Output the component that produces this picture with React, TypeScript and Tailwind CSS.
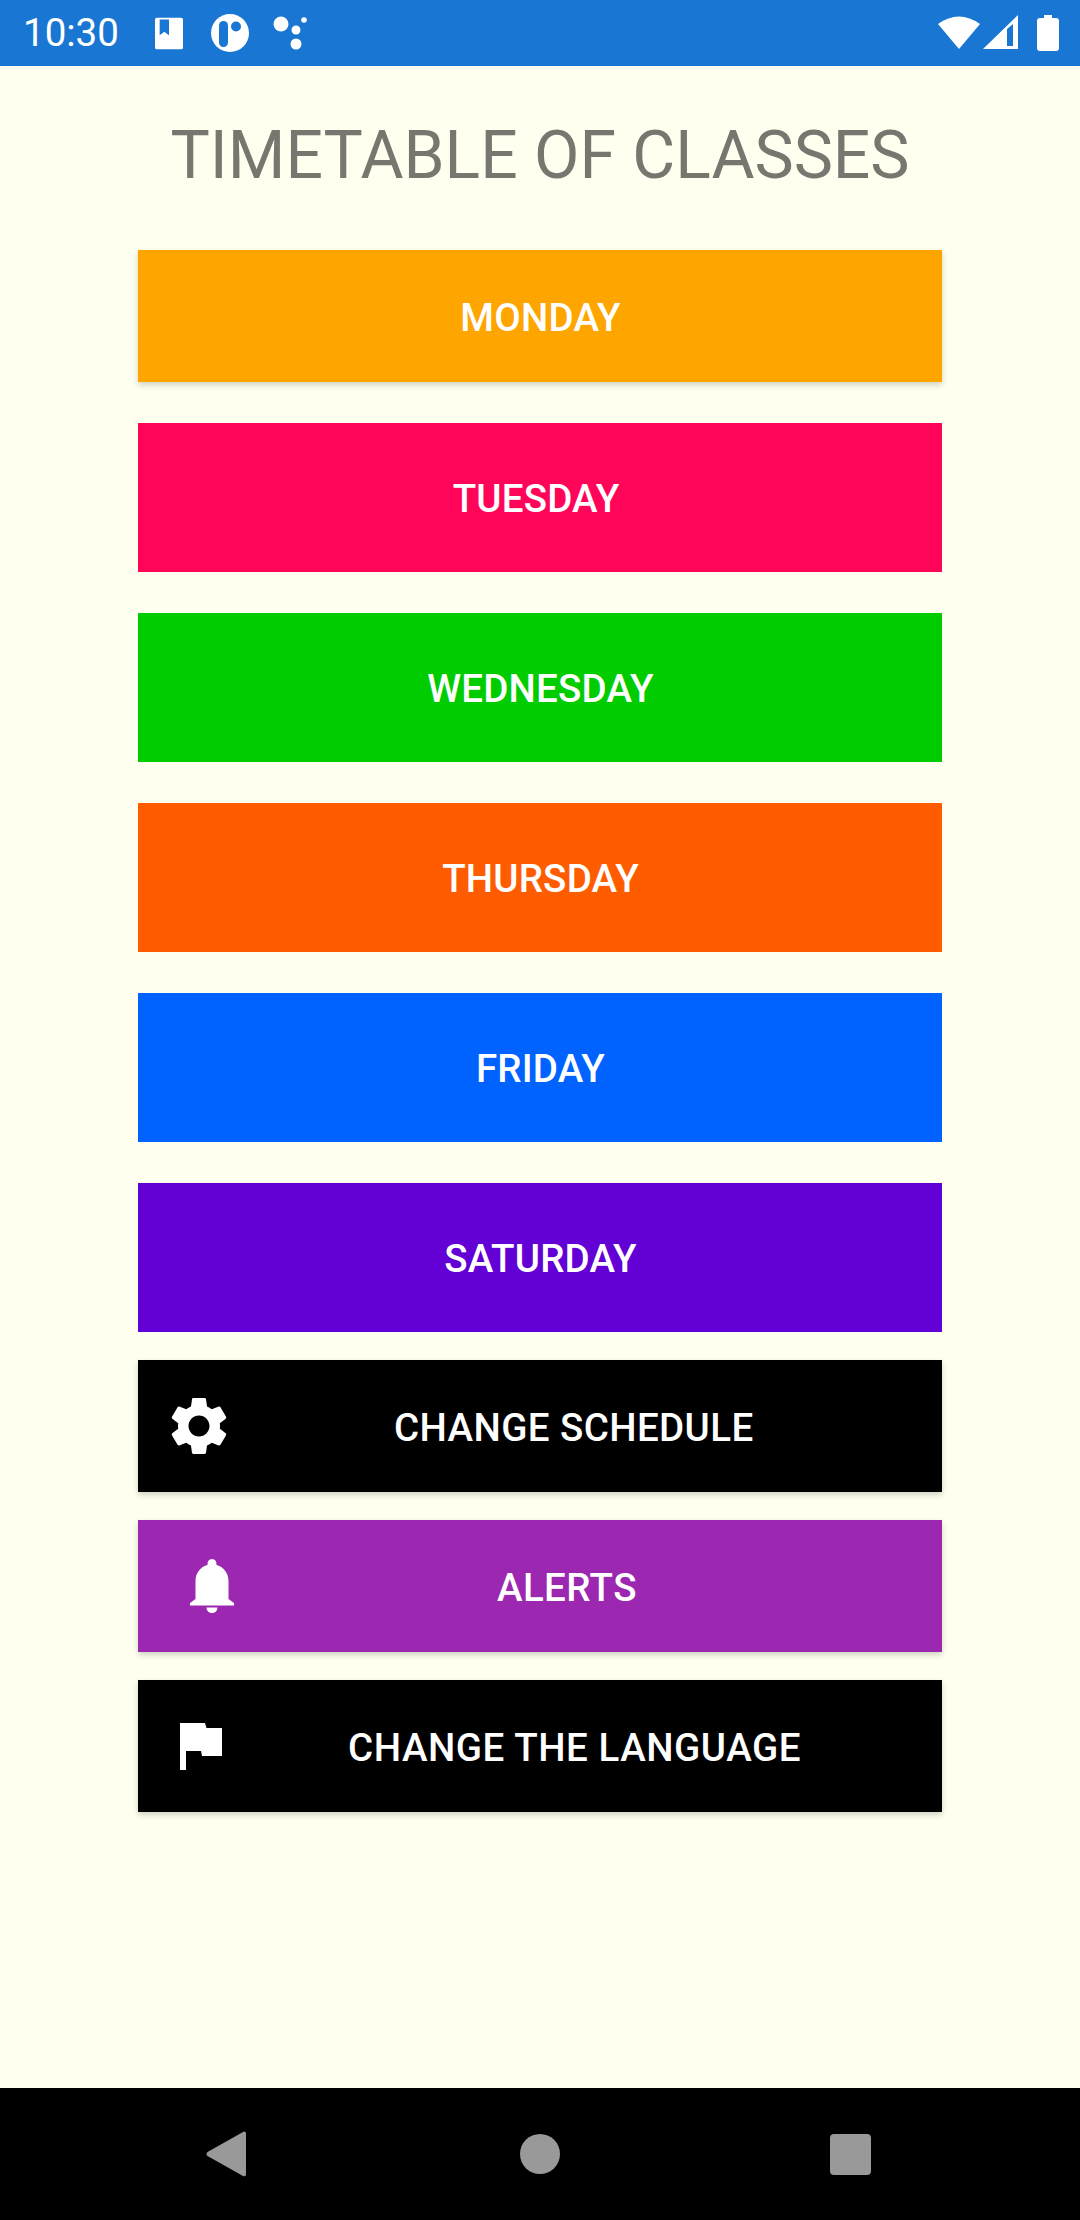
import React from 'react';

const days = [
  { label: 'MONDAY', cls: 'bg-[#ffa500] h-[132px] mt-0 shadow-[0_3px_6px_rgba(0,0,0,0.18)]', text: 'pl-[1px]' },
  { label: 'TUESDAY', cls: 'bg-[#ff055a] h-[149px] mt-[41px]', text: 'pr-[8px]' },
  { label: 'WEDNESDAY', cls: 'bg-[#00cc00] h-[149px] mt-[41px]', text: 'pl-[1px]' },
  { label: 'THURSDAY', cls: 'bg-[#ff5c00] h-[149px] mt-[41px]', text: 'pl-[1px]' },
  { label: 'FRIDAY', cls: 'bg-[#0062ff] h-[149px] mt-[41px]', text: 'pl-[1px]' },
  { label: 'SATURDAY', cls: 'bg-[#6200d6] h-[149px] mt-[41px]', text: 'pl-[1px]' },
];

function StatusBar() {
  return (
    <div className="h-[66px] bg-[#1976d2] flex items-center text-white shrink-0">
      <span className="ml-[23px] text-[38.500px] font-[Roboto] leading-none">10:30</span>
      <svg className="ml-[36px]" width="28" height="35" viewBox="0 0 30 36" fill="#fff">
        <path fillRule="evenodd" d="M2 1h26a2 2 0 0 1 2 2v30a2 2 0 0 1-2 2H2a2 2 0 0 1-2-2V3a2 2 0 0 1 2-2zM5 3v17l5-4 5 4V3z" />
      </svg>
      <svg className="ml-[28px]" width="38" height="38" viewBox="0 0 38 38">
        <circle cx="19" cy="19" r="19" fill="#fff" />
        <rect x="8" y="7" width="9" height="26" rx="4.500" fill="#1976d2" />
        <circle cx="25" cy="12.500" r="5" fill="#1976d2" />
      </svg>
      <svg className="ml-[24px]" width="36" height="36" viewBox="0 0 36 36" fill="#fff">
        <circle cx="8" cy="9" r="7.500" />
        <circle cx="23" cy="15" r="4.500" />
        <circle cx="31" cy="5" r="2.800" />
        <circle cx="23" cy="29" r="5.500" />
      </svg>
      <div className="flex-1" />
      <svg width="42" height="36" viewBox="0 0 42 36" fill="#fff">
        <path d="M0 9 Q21 -6 42 9 L21 34 Z" />
      </svg>
      <svg className="ml-[3px]" width="35" height="36" viewBox="0 0 35 36">
        <path fill="#fff" d="M35 0v34H0z" />
        <path fill="#1976d2" d="M24 14 L30 9 L30 31 L24 31z" />
      </svg>
      <svg className="ml-[19px] mr-[21px]" width="22" height="36" viewBox="0 0 22 36" fill="#fff">
        <path d="M7 0h8v3h4a3 3 0 0 1 3 3v27a3 3 0 0 1-3 3H3a3 3 0 0 1-3-3V6a3 3 0 0 1 3-3h4z" />
      </svg>
    </div>
  );
}

function NavBar() {
  return (
    <div className="h-[132px] bg-black flex items-center shrink-0">
      <svg className="ml-[206px]" width="40" height="46" viewBox="0 0 40 46" fill="#999">
        <path d="M38 0.500a2 2 0 0 1 2 2v41a2 2 0 0 1-3 1.500L1.500 25a2.500 2.500 0 0 1 0-4L37 1z" />
      </svg>
      <div className="ml-[274px] w-[40px] h-[40px] rounded-full bg-[#999]" />
      <div className="ml-[270px] w-[41px] h-[41px] rounded-[4px] bg-[#999]" />
    </div>
  );
}

function GearIcon() {
  return (
    <svg width="70" height="70" viewBox="0 0 24 24" fill="#fff">
      <path d="M19.140 12.940c.04-.3.06-.61.06-.94 0-.32-.02-.64-.07-.94l2.030-1.580a.49.49 0 0 0 .12-.61l-1.920-3.320a.488.488 0 0 0-.59-.22l-2.390.96c-.5-.38-1.030-.7-1.620-.94l-.36-2.540a.484.484 0 0 0-.48-.41h-3.840c-.24 0-.43.17-.47.41l-.36 2.540c-.59.24-1.130.57-1.620.94l-2.390-.96c-.22-.08-.47 0-.59.22L2.740 8.870c-.12.21-.08.47.12.61l2.030 1.580c-.05.3-.09.63-.09.94s.02.64.07.94l-2.030 1.580a.49.49 0 0 0-.12.61l1.920 3.320c.12.22.37.29.59.22l2.390-.96c.5.38 1.030.7 1.620.94l.36 2.540c.05.24.24.41.48.41h3.840c.24 0 .44-.17.47-.41l.36-2.540c.59-.24 1.130-.56 1.620-.94l2.390.96c.22.08.47 0 .59-.22l1.920-3.320c.12-.22.07-.47-.12-.61l-2.010-1.580zM12 15.600c-1.980 0-3.600-1.620-3.600-3.600s1.620-3.600 3.600-3.600 3.600 1.620 3.600 3.600-1.620 3.600-3.600 3.600z" />
    </svg>
  );
}

function BellIcon() {
  return (
    <svg width="44" height="54" viewBox="0 0 44 54" fill="#fff">
      <path d="M22 0a4.500 4.500 0 0 1 4.300 5.800C33.500 8 38.500 14 38.500 22v18l5.500 4v2.500H0V44l5.500-4V22C5.500 14 10.500 8 17.700 5.800A4.500 4.500 0 0 1 22 0z" />
      <path d="M16.500 48.500h11a5.500 5.500 0 0 1-11 0z" />
    </svg>
  );
}

function FlagIcon() {
  return (
    <svg width="42" height="47" viewBox="0 0 42 47" fill="#fff">
      <path d="M0 0h25l1.500 5H42v28H22L21 28H6v19H0z" />
    </svg>
  );
}

export default function App() {
  return (
    <div className="w-[1080px] h-[2220px] flex flex-col bg-[#ffffef] font-[Roboto,sans-serif]">
      <StatusBar />
      <div className="flex-1 flex flex-col items-center">
        <h1 className="mt-[53px] h-[74px] leading-[74px] text-[66px] font-normal text-[#777770]">TIMETABLE OF CLASSES</h1>
        <div className="w-[804px] mt-[57px] flex flex-col">
          {days.map(d => (
            <button key={d.label} className={`w-full flex items-center justify-center pt-[3px] text-white text-[38.500px] tracking-[0.2px] font-medium ${d.cls}`}>
              <span className={d.text}>{d.label}</span>
            </button>
          ))}
          <button className="mt-[28px] h-[132px] w-full bg-black shadow-[0_3px_6px_rgba(0,0,0,0.18)] text-white text-[38.500px] tracking-[0.4px] font-medium flex items-center pl-[26px]">
            <GearIcon />
            <span className="ml-[160px] pt-[3px]">CHANGE SCHEDULE</span>
          </button>
          <button className="mt-[28px] h-[132px] w-full bg-[#9c27b0] shadow-[0_3px_6px_rgba(0,0,0,0.18)] text-white text-[38.500px] tracking-[0.4px] font-medium flex items-center pl-[52px]">
            <BellIcon />
            <span className="ml-[263px] pt-[3px]">ALERTS</span>
          </button>
          <button className="mt-[28px] h-[132px] w-full bg-black shadow-[0_3px_6px_rgba(0,0,0,0.18)] text-white text-[38.500px] tracking-[0.55px] font-medium flex items-center pl-[42px]">
            <FlagIcon />
            <span className="ml-[126px] pt-[3px]">CHANGE THE LANGUAGE</span>
          </button>
        </div>
      </div>
      <NavBar />
    </div>
  );
}
